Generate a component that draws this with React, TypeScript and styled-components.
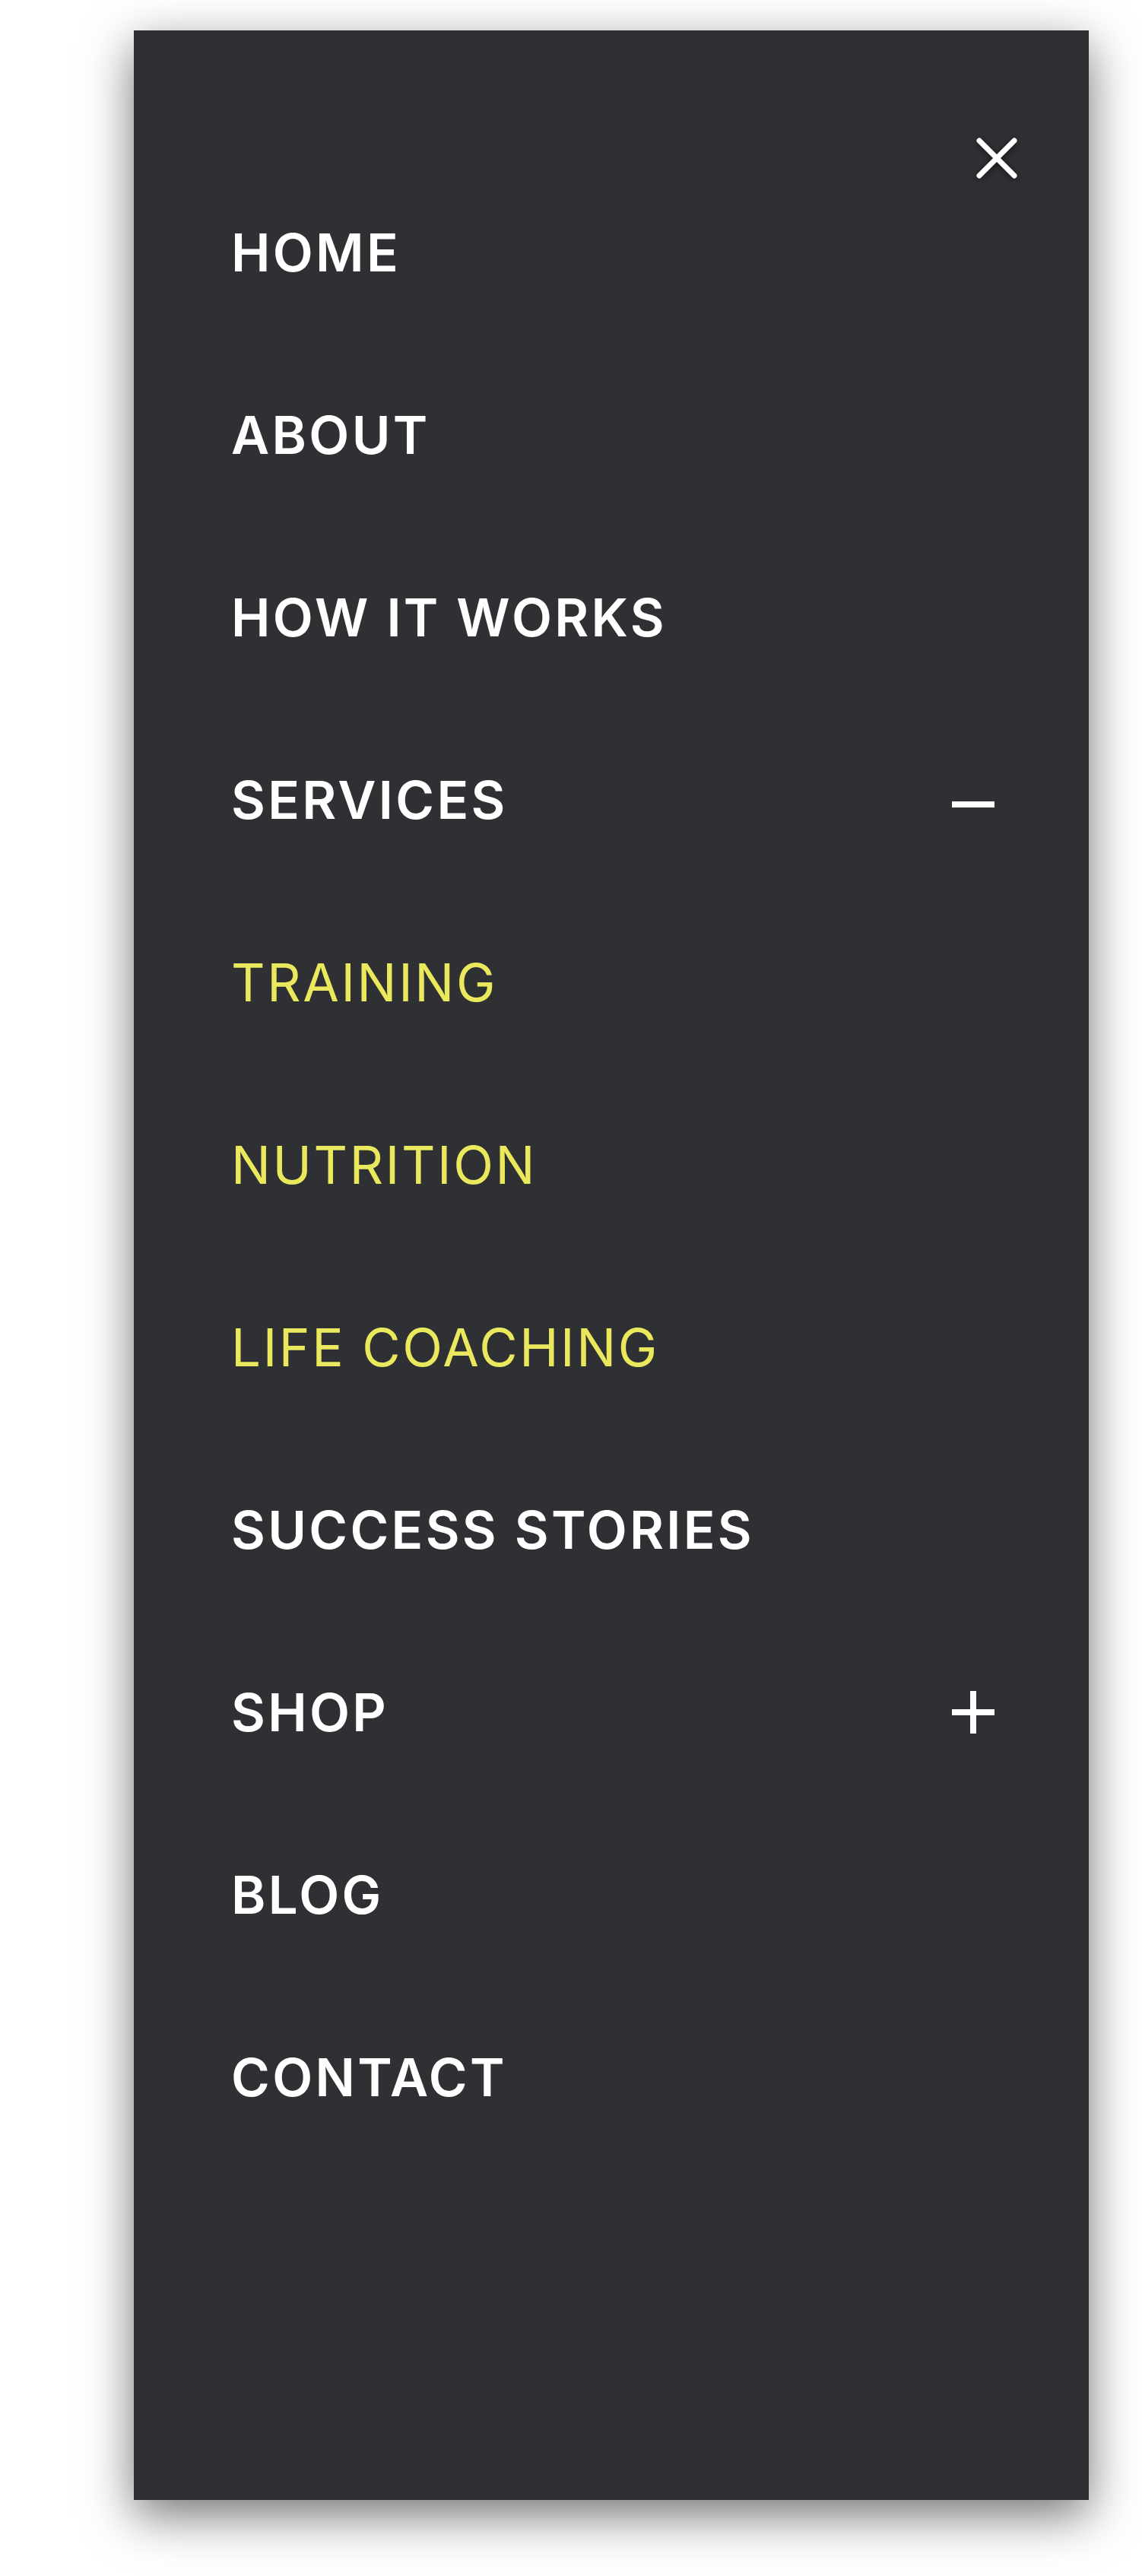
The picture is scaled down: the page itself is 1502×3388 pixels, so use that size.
import React from "react";
import styled, { createGlobalStyle } from "styled-components";

const GlobalStyle = createGlobalStyle`
  html, body {
    margin: 0;
    padding: 0;
    background: #ffffff;
  }
  body {
    font-family: "Inter", "Liberation Sans", sans-serif;
  }
`;

const Page = styled.div`
  min-height: 3388px;
  padding: 40px 0 0 176px;
  box-sizing: border-box;
`;

const Drawer = styled.nav`
  width: 1256px;
  height: 3248px;
  background: #2f3034;
  box-shadow: 0 20px 60px rgba(0, 0, 0, 0.55);
  display: flex;
  flex-direction: column;
`;

const Header = styled.div`
  display: flex;
  justify-content: flex-end;
  padding: 141px 94px 0 0;
`;

const CloseButton = styled.button`
  width: 54px;
  height: 54px;
  padding: 0;
  border: 0;
  background: transparent;
  cursor: pointer;
  display: block;
  filter: drop-shadow(0 2px 4px rgba(0, 0, 0, 0.55));
`;

const Menu = styled.ul`
  list-style: none;
  margin: 0;
  padding: 0 124px 0 128px;
`;

const Item = styled.li`
  height: 240px;
  box-sizing: border-box;
  padding-top: 62px;
  display: flex;
  align-items: flex-start;
  justify-content: space-between;
`;

const Label = styled.a<{ $sub?: boolean }>`
  font-family: "Inter", "Liberation Sans", sans-serif;
  font-size: 69px;
  line-height: 70px;
  font-weight: ${(p) => (p.$sub ? 400 : 600)};
  letter-spacing: ${(p) => (p.$sub ? "0.038em" : "0.048em")};
  color: ${(p) => (p.$sub ? "#eae85c" : "#ffffff")};
  text-decoration: none;
  text-transform: uppercase;
  white-space: nowrap;
`;

const Toggle = styled.span`
  width: 56px;
  height: 70px;
  display: flex;
  align-items: center;
  justify-content: center;
`;

const CloseIcon = () => (
  <svg width="54" height="54" viewBox="0 0 54 54" aria-hidden="true">
    <g stroke="#ffffff" strokeWidth="7" strokeLinecap="round">
      <line x1="4" y1="4" x2="50" y2="50" />
      <line x1="50" y1="4" x2="4" y2="50" />
    </g>
  </svg>
);

const MinusIcon = () => (
  <svg width="56" height="56" viewBox="0 0 56 56" aria-hidden="true">
    <rect x="0" y="30" width="56" height="8" fill="#ffffff" />
  </svg>
);

const PlusIcon = () => (
  <svg width="56" height="56" viewBox="0 0 56 56" aria-hidden="true">
    <rect x="0" y="24" width="56" height="8" fill="#ffffff" />
    <rect x="24" y="0" width="8" height="56" fill="#ffffff" />
  </svg>
);

type Entry = { label: string; sub?: boolean; toggle?: "open" | "closed" };

const entries: Entry[] = [
  { label: "Home" },
  { label: "About" },
  { label: "How it works" },
  { label: "Services", toggle: "open" },
  { label: "Training", sub: true },
  { label: "Nutrition", sub: true },
  { label: "Life coaching", sub: true },
  { label: "Success stories" },
  { label: "Shop", toggle: "closed" },
  { label: "Blog" },
  { label: "Contact" },
];

export default function App() {
  return (
    <>
      <GlobalStyle />
      <Page>
        <Drawer>
          <Header>
            <CloseButton aria-label="Close menu">
              <CloseIcon />
            </CloseButton>
          </Header>
          <Menu>
            {entries.map((e) => (
              <Item key={e.label}>
                <Label href="#" $sub={e.sub}>
                  {e.label}
                </Label>
                {e.toggle && (
                  <Toggle>{e.toggle === "open" ? <MinusIcon /> : <PlusIcon />}</Toggle>
                )}
              </Item>
            ))}
          </Menu>
        </Drawer>
      </Page>
    </>
  );
}
